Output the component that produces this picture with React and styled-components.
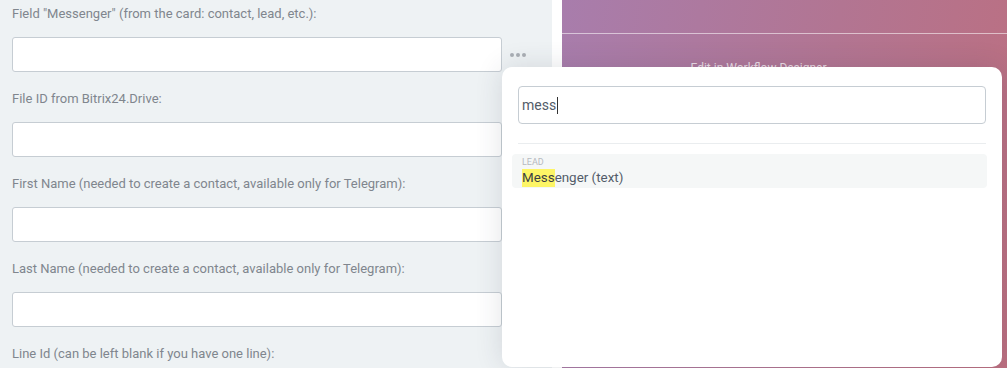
import React from "react";
import styled, { createGlobalStyle } from "styled-components";

const GlobalStyle = createGlobalStyle`
  html, body { margin: 0; padding: 0; background: #fff; }
  body { font-family: Roboto, "Noto Sans", sans-serif; }
  #root { width: 1007px; height: 368px; overflow: hidden; }
`;

const Page = styled.div`
  position: relative;
  display: flex;
  gap: 10px;
  width: 1007px;
  height: 368px;
  overflow: hidden;
  background: #fff;
`;

const FormPanel = styled.div`
  width: 552px;
  flex: none;
  background: #eef2f4;
  padding: 6px 0 0 12px;
  box-sizing: border-box;
  overflow: hidden;
`;

const Field = styled.div`
  display: flex;
  flex-direction: column;
  gap: 15px;
  margin-bottom: 19px;
`;

const Label = styled.div`
  font-size: 13px;
  line-height: 16px;
  color: #80868e;
  white-space: nowrap;
`;

const InputRow = styled.div`
  display: flex;
  align-items: center;
  gap: 8px;
`;

const TextInput = styled.div`
  width: 490px;
  height: 35px;
  box-sizing: border-box;
  background: #fff;
  border: 1px solid #c6cdd3;
  border-radius: 3px;
`;

const DotsButton = styled.div`
  display: flex;
  gap: 2px;
  padding: 2px 0;
`;

const Dot = styled.span`
  width: 4px;
  height: 4px;
  border-radius: 50%;
  background: #a9aeb4;
`;

const DesignerPanel = styled.div`
  flex: 1;
  background: linear-gradient(100deg, #a87dac 0%, #b27592 55%, #bc6f80 100%);
  display: flex;
  flex-direction: column;
`;

const DesignerTop = styled.div`
  height: 33px;
  border-bottom: 1px solid rgba(255, 255, 255, 0.55);
`;

const DesignerLink = styled.div`
  margin-top: 27px;
  padding-right: 52px;
  text-align: center;
  font-size: 12px;
  line-height: 14px;
  color: rgba(255, 255, 255, 0.75);
`;

const Popup = styled.div`
  position: absolute;
  left: 502px;
  top: 67px;
  width: 500px;
  height: 300px;
  background: #fff;
  border-radius: 10px;
  box-shadow: 0 0 28px rgba(40, 50, 70, 0.14);
  display: flex;
  flex-direction: column;
  box-sizing: border-box;
  padding: 19px 15px 0 10px;
`;

const SearchBox = styled.div`
  margin: 0 1px 0 6px;
  height: 38px;
  box-sizing: border-box;
  border: 1px solid #c6cdd3;
  border-radius: 4px;
  display: flex;
  align-items: center;
  padding-left: 3px;
  font-size: 14px;
  color: #535c69;
`;

const Caret = styled.span`
  display: inline-block;
  width: 1px;
  height: 17px;
  background: #333;
  margin-left: 1px;
`;

const Divider = styled.div`
  margin: 19px 1px 0 6px;
  height: 1px;
  background: #eaedef;
`;

const ResultItem = styled.div`
  margin-top: 10px;
  height: 34px;
  box-sizing: border-box;
  padding: 3px 10px 0;
  background: #f5f7f7;
  border-radius: 4px;
  display: flex;
  flex-direction: column;
`;

const EntityTag = styled.div`
  font-size: 9px;
  line-height: 11px;
  color: #b5babf;
  text-transform: uppercase;
`;

const ResultTitle = styled.div`
  font-size: 13.4px;
  line-height: 19px;
  height: 19px;
  color: #535c69;
  white-space: nowrap;
`;

const Highlight = styled.span`
  display: inline-block;
  background: #fdf566;
  color: #3b3f44;
  line-height: 18px;
`;

const fields = [
  'Field "Messenger" (from the card: contact, lead, etc.):',
  "File ID from Bitrix24.Drive:",
  "First Name (needed to create a contact, available only for Telegram):",
  "Last Name (needed to create a contact, available only for Telegram):",
  "Line Id (can be left blank if you have one line):",
];

export default function App() {
  return (
    <Page>
      <GlobalStyle />
      <FormPanel>
        {fields.map((label, i) => (
          <Field key={label}>
            <Label>{label}</Label>
            <InputRow>
              <TextInput />
              {i === 0 && (
                <DotsButton>
                  <Dot />
                  <Dot />
                  <Dot />
                </DotsButton>
              )}
            </InputRow>
          </Field>
        ))}
      </FormPanel>
      <DesignerPanel>
        <DesignerTop />
        <DesignerLink>Edit in Workflow Designer</DesignerLink>
      </DesignerPanel>
      <Popup>
        <SearchBox>
          mess
          <Caret />
        </SearchBox>
        <Divider />
        <ResultItem>
          <EntityTag>Lead</EntityTag>
          <ResultTitle>
            <Highlight>Mess</Highlight>enger (text)
          </ResultTitle>
        </ResultItem>
      </Popup>
    </Page>
  );
}
